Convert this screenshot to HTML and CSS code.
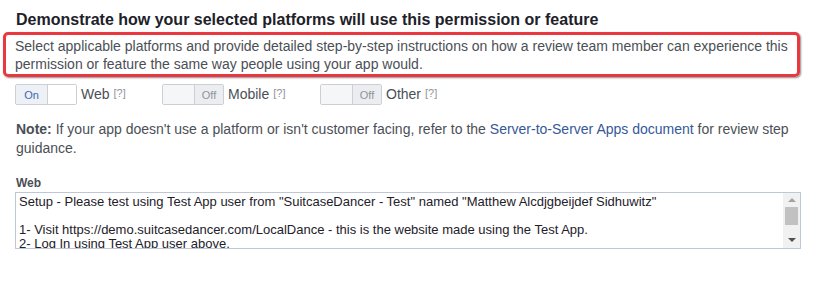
FILE: index.html
```html
<!DOCTYPE html>
<html lang="en">
<head>
    <meta charset="UTF-8">
    <title>Permission Review</title>
    <link rel="stylesheet" href="styles.css">
</head>
<body>

<div class="page">
    <h2 class="title">Demonstrate how your selected platforms will use this permission or feature</h2>
    <div class="callout">
        Select applicable platforms and provide detailed step-by-step instructions on how a review team member can experience this
        permission or feature the same way people using your app would.
    </div>

    <div class="platforms">
        <div class="platform">
            <div class="toggle on">
                <span class="seg seg-on">On</span>
                <span class="seg seg-blank"></span>
            </div>
            <span class="name">Web</span><span class="help">[?]</span>
        </div>
        <div class="platform">
            <div class="toggle off">
                <span class="seg seg-blank"></span>
                <span class="seg seg-off">Off</span>
            </div>
            <span class="name">Mobile</span><span class="help">[?]</span>
        </div>
        <div class="platform">
            <div class="toggle off">
                <span class="seg seg-blank"></span>
                <span class="seg seg-off">Off</span>
            </div>
            <span class="name">Other</span><span class="help">[?]</span>
        </div>
    </div>

    <p class="note">
        <b>Note:</b> If your app doesn't use a platform or isn't customer facing, refer to the <a href="#">Server-to-Server Apps document</a> for review step
        guidance.
    </p>

    <label class="field-label">Web</label>
    <div class="textbox">
        <div class="textbox-text">Setup - Please test using Test App user from "SuitcaseDancer - Test" named "Matthew Alcdjgbeijdef Sidhuwitz"

1- Visit https://demo.suitcasedancer.com/LocalDance - this is the website made using the Test App.
2- Log In using Test App user above.
3- Click "Connect with Facebook".</div>
        <div class="scrollbar">
            <span class="arrow up"></span>
            <span class="thumb"></span>
            <span class="arrow down"></span>
        </div>
    </div>
</div>

</body>
</html>
```

FILE: styles.css
```css
body {
    margin: 0;
    padding: 0;
    background-color: #fff;
    font-family: "Liberation Sans", Arial, sans-serif;
    color: #4b4f56;
}
.page {
    padding: 10px 16px 0 15px;
}
.title {
    margin: 0 0 2px 1px;
    font-size: 16px;
    line-height: 20px;
    font-weight: bold;
    color: #1d2129;
}
.callout {
    margin-left: -12px;
    margin-right: 1px;
    padding: 2px 2px 1px 9px;
    border: 3px solid #e9383f;
    border-radius: 5px;
    box-shadow: 1px 1px 2px rgba(0, 0, 0, 0.45);
    font-size: 14px;
    line-height: 18px;
}
.platforms {
    display: flex;
    margin-top: 7px;
    height: 21px;
}
.platform {
    display: flex;
    align-items: center;
}
.platform:nth-child(1) {
    width: 147px;
}
.platform:nth-child(2) {
    width: 158px;
}
.toggle {
    display: flex;
    width: 62px;
    height: 21px;
    box-sizing: border-box;
    border: 1px solid #ccd0d5;
    border-radius: 2px;
    overflow: hidden;
    margin-right: 4px;
}
.seg {
    display: flex;
    align-items: center;
    justify-content: center;
    font-size: 11px;
}
.seg-on {
    width: 31px;
    background-color: #edf0f5;
    color: #4267b2;
    border-right: 1px solid #ccd0d5;
}
.seg-blank {
    flex: 1;
    background-color: #fff;
}
.off .seg-blank {
    background-color: #f5f6f7;
    border-right: 1px solid #ccd0d5;
}
.seg-off {
    width: 28px;
    background-color: #ebedf0;
    color: #90949c;
}
.name {
    font-size: 14px;
    margin-top: -2px;
}
.help {
    font-size: 11px;
    color: #90949c;
    margin-left: 4px;
    margin-top: -3px;
}
.note {
    margin: 15px 0 0 1px;
    font-size: 14px;
    line-height: 19px;
}
.note b {
    color: #4b4f56;
}
.note a {
    color: #365899;
    text-decoration: none;
}
.field-label {
    display: block;
    margin: 18px 0 2px 1px;
    font-size: 12px;
    line-height: 14px;
    font-weight: bold;
    color: #4b4f56;
}
.textbox {
    display: flex;
    height: 57px;
    box-sizing: border-box;
    border: 1px solid #bdc7d8;
    overflow: hidden;
}
.textbox-text {
    flex: 1;
    padding: 2px 3px;
    font-size: 13px;
    line-height: 14px;
    white-space: pre-wrap;
    color: #1d2129;
    overflow: hidden;
}
.scrollbar {
    width: 17px;
    background-color: #f1f1f1;
    display: flex;
    flex-direction: column;
    align-items: center;
}
.arrow {
    width: 0;
    height: 0;
    border-left: 4px solid transparent;
    border-right: 4px solid transparent;
}
.arrow.up {
    margin-top: 5px;
    border-bottom: 4px solid #a3a3a3;
}
.arrow.down {
    margin-top: auto;
    margin-bottom: 6px;
    border-top: 4px solid #505050;
}
.thumb {
    width: 13px;
    height: 18px;
    margin-top: 5px;
    background-color: #c1c1c1;
}
```
